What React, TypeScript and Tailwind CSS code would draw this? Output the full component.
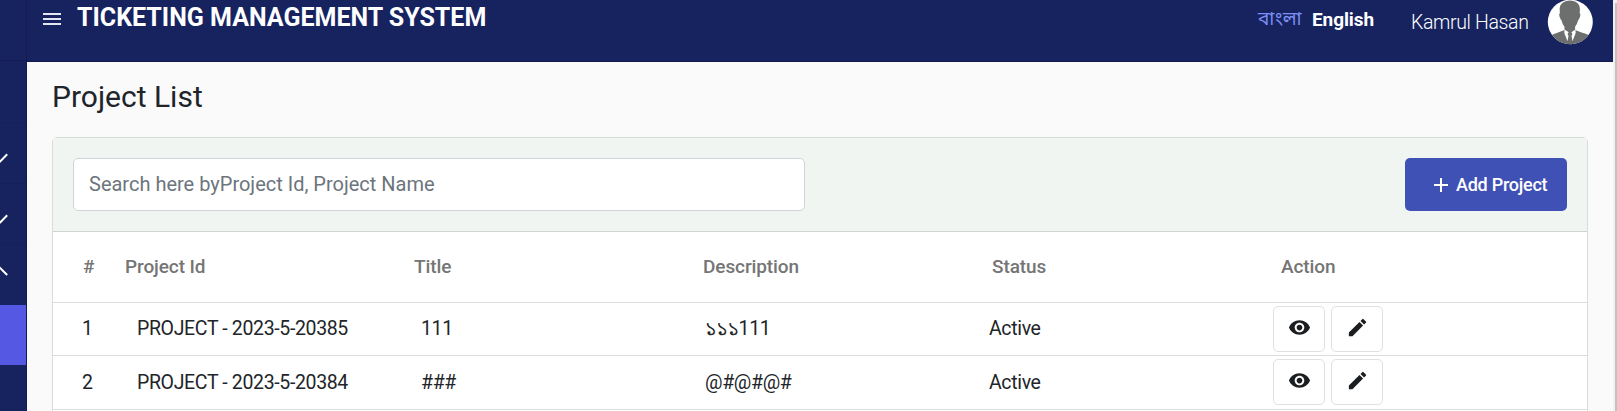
import React from "react";

const projects = [
  { no: "1", id: "PROJECT - 2023-5-20385", title: "111", description: "১১১111", status: "Active" },
  { no: "2", id: "PROJECT - 2023-5-20384", title: "###", description: "@#@#@#", status: "Active" },
];

const columns = "grid grid-cols-[72px_289px_289px_289px_284px_1fr] items-center";

function Chevron({ up = false }: { up?: boolean }) {
  return (
    <svg width="8" height="10" viewBox="0 0 8 10" className="block" fill="none" stroke="#fff" strokeWidth="2">
      <path d={up ? "M-7 8.7L-0.3 1.6L7.2 9" : "M-7 1L0.3 8.4L7.2 1.3"} />
    </svg>
  );
}

function Avatar() {
  return (
    <svg width="46" height="45" viewBox="0 0 46 45" className="block">
      <clipPath id="avatar-clip">
        <ellipse cx="23.3" cy="22" rx="22.5" ry="22.3" />
      </clipPath>
      <g clipPath="url(#avatar-clip)">
        <rect width="46" height="45" fill="#fff" />
        <path
          fill="#6d6e6e"
          d="M23 .6c6.500 0 9.900 3.600 9.900 8.400 0 2.300-.2 3.300-.2 4.200 1 .2.8 2.600-.2 4.800-.5 1.400-1 1.700-1.400 2.300-.7 3-2 5.200-3 6.500v3.200l6.500 2.500c6 1.800 9.400 3.200 10.400 5V45H1v-7.500c1-1.800 5-3.200 10-5l6.500-2.500v-3.200c-1.200-1.400-2.400-3.600-3-6.500-.6-.6-1-1-1.400-2.300-1-2.200-1.200-4.600-.2-4.800 0-1-.2-2-.2-4.200C12.700 4.200 16.500.6 23 .6z"
        />
        <path fill="#fff" d="M17.500 29.500l4.200 2.800-1.200 1.800 1 1.700-1 5.400-3.200-8.200zM28.500 29.500l-4.200 2.800 1.200 1.800-1 1.700 1 5.400 3.200-8.200z" />
      </g>
    </svg>
  );
}

function EyeIcon() {
  return (
    <svg width="23" height="23" viewBox="0 0 24 24" fill="#1b1e21">
      <path d="M12 4.500C7 4.500 2.730 7.610 1 12c1.730 4.390 6 7.500 11 7.500s9.270-3.110 11-7.500c-1.730-4.390-6-7.500-11-7.500zM12 17c-2.760 0-5-2.240-5-5s2.240-5 5-5 5 2.240 5 5-2.240 5-5 5zm0-8c-1.660 0-3 1.340-3 3s1.340 3 3 3 3-1.340 3-3-1.340-3-3-3z" />
    </svg>
  );
}

function PencilIcon() {
  return (
    <svg width="23" height="23" viewBox="0 0 24 24" fill="#1b1e21">
      <path d="M3 17.250V21h3.750L17.810 9.940l-3.750-3.750L3 17.250zM20.710 7.040a.996.996 0 0 0 0-1.410l-2.340-2.340a.996.996 0 0 0-1.410 0l-1.830 1.830 3.750 3.750 1.830-1.830z" />
    </svg>
  );
}

function ActionButton({ label, children }: { label: string; children: React.ReactNode }) {
  return (
    <button
      aria-label={label}
      className="flex h-[46px] w-[52px] items-center justify-center rounded-[5px] border border-[#dfe0e1] bg-white pb-[3px]"
    >
      {children}
    </button>
  );
}

export default function App() {
  return (
    <div className="flex h-[411px] w-[1617px] overflow-hidden bg-[#fafafa] font-['Roboto','Noto_Sans_Bengali','Noto_Sans',sans-serif] text-[20px] text-[#212529]">
      <aside className="flex h-full w-[27px] shrink-0 flex-col border-r border-[#121c54] bg-[#16235f]">
        <div className="h-[61px] border-b border-[#131d56]" />
        <div className="h-[61px]" />
        <div className="flex h-[61px] items-start border-t border-[#14205a] pt-[30px]">
          <Chevron />
        </div>
        <div className="flex h-[61px] items-start border-t border-[#14205a] pt-[30px]">
          <Chevron />
        </div>
        <div className="flex h-[61px] items-start border-t border-[#14205a] pt-[21px]">
          <Chevron up />
        </div>
        <div className="h-[60px] bg-[#5558e3]" />
      </aside>

      <div className="flex w-[1586px] shrink-0 flex-col">
        <header className="flex h-[62px] shrink-0 items-start border-b border-[#111b52] bg-[#16235f] text-white">
          <button aria-label="Menu" className="ml-4 mt-[13px] flex w-[18px] flex-col gap-[3px]">
            <span className="h-[2px] w-full bg-[#e4e6f0]" />
            <span className="h-[2px] w-full bg-[#e4e6f0]" />
            <span className="h-[2px] w-full bg-[#e4e6f0]" />
          </button>
          <h1 className="ml-4 mt-1 w-[409px] whitespace-nowrap text-[25px] font-bold leading-[28px]">
            TICKETING MANAGEMENT SYSTEM
          </h1>
          <div className="ml-auto flex items-start whitespace-nowrap">
            <a className="mt-[7px] w-[54px] text-[19px] leading-6 text-[#7d8ef5]">বাংলা</a>
            <a className="mt-2 w-[99px] text-[19px] font-bold leading-6 tracking-[-0.1px]">English</a>
            <span className="mt-[11px] w-[136px] text-[19.5px] font-light leading-6 tracking-[-0.35px]">
              Kamrul Hasan
            </span>
            <Avatar />
            <span className="w-5" />
          </div>
        </header>

        <main className="flex flex-col pl-[25px] pr-[25px]">
          <h2 className="mt-[17px] h-[58px] text-[30px] font-normal leading-9">Project List</h2>
          <section className="h-[290px] rounded-t-[5px] border border-[#d8dcdc] bg-white">
            <div className="flex h-[94px] items-center justify-between border-b border-[#cfd4d2] bg-[#f0f5f2] px-5">
              <input
                className="h-[53px] w-[732px] rounded-[5px] border border-[#ced4da] bg-white px-[15px] pb-[2px] text-[20px] placeholder:text-[#6c757d] placeholder:opacity-100"
                placeholder="Search here byProject Id, Project Name"
              />
              <button className="flex h-[53px] w-[162px] items-center rounded-[5px] bg-[#3f51b5] pl-[29px] text-[18px] font-medium tracking-[-0.25px] text-white">
                <svg width="14" height="14" viewBox="0 0 14 14" className="mr-2 shrink-0" stroke="#fff" strokeWidth="2">
                  <path d="M7 0v14M0 7h14" />
                </svg>
                <span className="whitespace-nowrap">Add Project</span>
              </button>
            </div>

            <div className={`${columns} h-[71px] border-b border-[#dcdddf] text-[19px] font-medium tracking-[-0.1px] text-[#757575]`}>
              <span className="pl-[30px]">#</span>
              <span>Project Id</span>
              <span>Title</span>
              <span>Description</span>
              <span>Status</span>
              <span className="pl-[5px]">Action</span>
            </div>

            {projects.map((project) => (
              <div
                key={project.no}
                className={`${columns} h-[53px] border-b border-[#dcdddf] text-[19.5px] tracking-[-0.35px] last:h-[54px]`}
              >
                <span className="pl-[29px]">{project.no}</span>
                <span className="pl-3">{project.id}</span>
                <span className="pl-[7px]">{project.title}</span>
                <span className="pl-[2px]">{project.description}</span>
                <span className="-ml-[3px]">{project.status}</span>
                <span className="-ml-[3px] mt-[3px] flex gap-[6px] self-start">
                  <ActionButton label="View">
                    <EyeIcon />
                  </ActionButton>
                  <ActionButton label="Edit">
                    <PencilIcon />
                  </ActionButton>
                </span>
              </div>
            ))}
          </section>
        </main>
      </div>

      <div className="flex w-[4px] shrink-0 justify-end bg-[#f1f1f1] pt-[3px]">
        <div className="h-full w-[2px] bg-[#c1c1c1]" />
      </div>
    </div>
  );
}
